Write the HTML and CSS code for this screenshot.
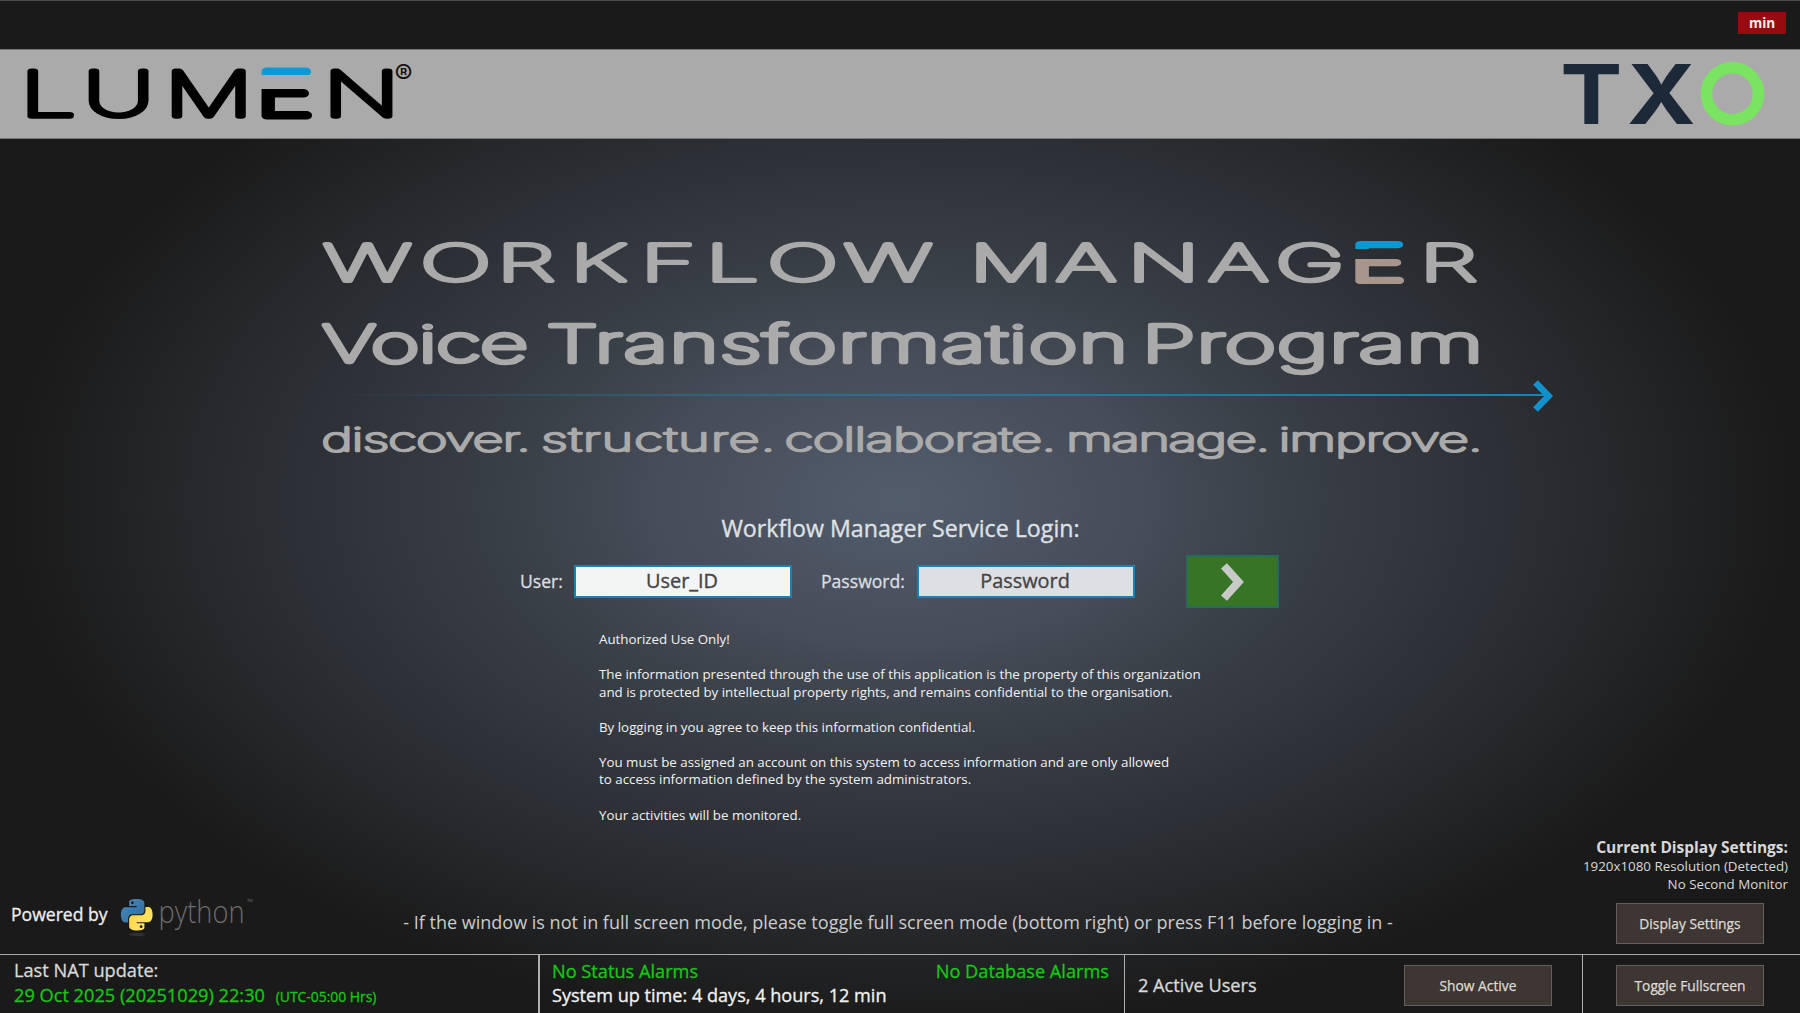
FILE: index.html
```html
<!DOCTYPE html>
<html lang="en">
<head>
<meta charset="utf-8">
<title>Workflow Manager</title>
<link rel="stylesheet" href="styles.css">
</head>
<body>
<div class="topbar"><button class="min">min</button></div>
<header class="band">
  <svg class="lumen" width="400" height="88" viewBox="20 50 400 88">
    <defs>
      <linearGradient id="lumenE" gradientUnits="userSpaceOnUse" x1="0" y1="67" x2="0" y2="119">
        <stop offset="0.155" stop-color="#0d98d4"/><stop offset="0.155" stop-color="#0d98d4" stop-opacity="0"/>
        <stop offset="0.42" stop-color="#000" stop-opacity="0"/><stop offset="0.42" stop-color="#000"/>
      </linearGradient>
    </defs>
    <g transform="scale(1.6 1)">
      <text class="lumen-text" y="116" x="12.800 52 103 160 202.200">LUM<tspan class="lumen-e">E</tspan>N</text>
    </g>
    <text class="reg" x="394.500" y="84">®</text>
  </svg>
  <svg class="txo" width="240" height="88" viewBox="1550 50 240 88">
    <g transform="scale(1.120 1)"><text class="txo-text" y="124" x="1393 1452.800">TX</text></g>
    <circle cx="1732.500" cy="93.800" r="26" fill="none" stroke="#7be362" stroke-width="11.500"/>
  </svg>
</header>
<main>
  <svg class="hero" width="1800" height="340" viewBox="0 139 1800 340">
    <defs>
      <linearGradient id="heroE" gradientUnits="userSpaceOnUse" x1="0" y1="241" x2="0" y2="284">
        <stop offset="0.175" stop-color="#0d98d4"/><stop offset="0.175" stop-color="#0d98d4" stop-opacity="0"/>
        <stop offset="0.430" stop-color="#a8968d" stop-opacity="0"/><stop offset="0.430" stop-color="#a8968d"/>
      </linearGradient>
      <linearGradient id="rule" x1="0" x2="1"><stop offset="0" stop-color="#1785b5" stop-opacity="0"/><stop offset="0.6" stop-color="#1b7fb0" stop-opacity=".8"/><stop offset="1" stop-color="#1785b5"/></linearGradient>
    </defs>
    <g class="line1">
      <g transform="scale(1.88 1)"><text y="281" x="172 223.500 264.200 303.200 340.700 375.300 408.100 448.900">WORKFLOW</text></g>
      <g transform="scale(1.85 1)"><text y="281" x="524 571 609.500 653.200 689.500 730 767.500">MANAG<tspan class="hero-e">E</tspan>R</text></g>
    </g>
    <g class="line2">
      <g transform="scale(1.650 1)"><text x="195.400" y="362" textLength="124.500">Voice</text></g>
      <g transform="scale(1.650 1)"><text x="331.200" y="362" textLength="352.300">Transformation</text></g>
      <g transform="scale(1.750 1)"><text x="652.500" y="362" textLength="195">Program</text></g>
    </g>
    <rect x="322" y="394" width="1222" height="2" fill="url(#rule)"/>
    <path d="M1535.500 382.500 L1548.500 396 L1535.500 409.500" fill="none" stroke="#1292cd" stroke-width="6.500"/>
    <g class="line3" transform="scale(1.650 1)">
      <text x="194.800" y="450.600" textLength="126.800">discover.</text>
      <text x="328" y="450.600" textLength="141.800">structure.</text>
      <text x="475.600" y="450.600" textLength="164.400">collaborate.</text>
      <text x="646.200" y="450.600" textLength="123.500">manage.</text>
      <text x="775" y="450.600" textLength="123.500">improve.</text>
    </g>
  </svg>
  <section class="login">
    <h1>Workflow Manager Service Login:</h1>
    <form class="fields">
      <label class="l-user">User:</label><div class="input user">User_ID</div>
      <label class="l-pass">Password:</label><div class="input pass">Password</div>
      <button type="button" class="go"><svg width="26" height="38" viewBox="0 0 26 38"><path d="M4 2.800 L18.500 19 L4 35.200" fill="none" stroke="#c8cac8" stroke-width="8"/></svg></button>
    </form>
  </section>
  <section class="legal">
    <p>Authorized Use Only!</p>
    <p>The information presented through the use of this application is the property of this organization<br>and is protected by intellectual property rights, and remains confidential to the organisation.</p>
    <p>By logging in you agree to keep this information confidential.</p>
    <p>You must be assigned an account on this system to access information and are only allowed<br>to access information defined by the system administrators.</p>
    <p>Your activities will be monitored.</p>
  </section>
  <section class="lower">
    <div class="powered">
      <span>Powered by</span>
      <svg width="150" height="48" viewBox="0 0 150 48">
        <defs>
          <linearGradient id="pb" x1="0" y1="0" x2="1" y2="1"><stop offset="0" stop-color="#4b8bbe"/><stop offset="1" stop-color="#2f6899"/></linearGradient>
          <linearGradient id="py" x1="0" y1="0" x2="1" y2="1"><stop offset="0" stop-color="#ffd43b"/><stop offset="1" stop-color="#ffe873"/></linearGradient>
        </defs>
        <ellipse cx="17" cy="42.500" rx="8" ry="1.800" fill="#303030"/>
        <g transform="translate(1 7) scale(1.310)">
          <path fill="url(#pb)" d="M14.250.180l.9.2.730.260.590.3.450.320.340.340.250.340.160.330.1.3.040.260.020.2-.010.130V8.500l-.050.630-.130.550-.210.460-.260.380-.3.310-.330.250-.350.190-.350.140-.330.1-.3.070-.260.040-.210.020H8.770l-.690.050-.590.140-.5.220-.410.270-.330.320-.270.350-.2.360-.150.370-.1.350-.070.320-.040.270-.020.210v3.060H3.170l-.210-.030-.280-.070-.320-.120-.350-.180-.360-.260-.360-.360-.350-.460-.320-.590-.280-.730-.210-.880-.140-1.050-.050-1.230.060-1.220.160-1.040.240-.870.320-.710.360-.570.4-.440.420-.330.420-.240.4-.160.360-.1.320-.050.240-.010h.160l.060.010h8.160v-.830H6.180l-.010-2.750-.020-.370.050-.340.110-.310.170-.280.250-.260.310-.230.380-.2.440-.180.510-.150.580-.120.640-.1.710-.060.770-.040.840-.020 1.270.050zm-6.300 1.980l-.230.330-.080.410.080.410.230.340.330.220.410.090.410-.090.330-.220.230-.340.080-.410-.080-.410-.230-.330-.330-.220-.410-.090-.410.090z"/>
          <path fill="url(#py)" d="M21.100 6.110l.280.060.320.120.350.180.360.270.360.350.350.470.320.590.280.730.210.880.140 1.040.050 1.230-.060 1.230-.160 1.040-.240.860-.320.710-.360.570-.4.450-.420.330-.420.240-.4.160-.360.090-.320.050-.240.020-.160-.010h-8.220v.820h5.840l.010 2.760.020.360-.050.340-.110.310-.170.290-.250.250-.310.240-.380.2-.440.170-.510.150-.580.130-.640.090-.710.070-.770.040-.840.010-1.270-.040-1.070-.140-.9-.2-.730-.250-.590-.3-.450-.330-.340-.340-.250-.340-.160-.330-.1-.3-.040-.250-.020-.2.010-.130v-5.340l.050-.640.130-.540.210-.460.260-.380.3-.320.330-.240.350-.2.350-.140.330-.1.3-.060.260-.040.210-.020.130-.010h5.840l.690-.050.590-.140.5-.210.410-.280.330-.320.270-.350.2-.360.150-.360.1-.350.070-.320.040-.280.020-.210V6.070h2.090l.140.010zm-6.470 14.250l-.230.330-.080.410.080.410.230.330.330.230.410.080.410-.080.330-.230.230-.330.080-.410-.080-.410-.230-.330-.330-.230-.410-.080-.410.080z"/>
        </g>
        <text class="python" x="38.500" y="30.500" textLength="86" lengthAdjust="spacingAndGlyphs">python</text>
        <text class="tm" x="127" y="13">™</text>
      </svg>
    </div>
    <p class="hint">- If the window is not in full screen mode, please toggle full screen mode (bottom right) or press F11 before logging in -</p>
    <div class="display">
      <strong>Current Display Settings:</strong>
      <span>1920x1080 Resolution (Detected)</span>
      <span>No Second Monitor</span>
      <button class="btn">Display Settings</button>
    </div>
  </section>
</main>
<footer>
  <div class="cell nat"><div>Last NAT update:</div><div class="green">29 Oct 2025 (20251029) 22:30 <small>(UTC-05:00 Hrs)</small></div></div>
  <div class="cell status">
    <div class="row green"><span>No Status Alarms</span><span>No Database Alarms</span></div>
    <div class="up">System up time: 4 days, 4 hours, 12 min</div>
  </div>
  <div class="cell users"><span>2 Active Users</span><button class="btn">Show Active</button></div>
  <div class="cell full"><button class="btn">Toggle Fullscreen</button></div>
</footer>
</body>
</html>
```
FILE: styles.css
```css
* { box-sizing: border-box; }
body {
  margin: 0; width: 1800px; height: 1013px; overflow: hidden;
  display: flex; flex-direction: column;
  font-family: "Open Sans", "Noto Sans", sans-serif; color: #d8d8d8;
  background: radial-gradient(ellipse 890px 530px at 900px 500px, #525d6c 0%, #464c58 28%, #3b4149 42%, #33373f 56%, #26282b 80%, #1a1a1a 100%) #1a1a1a;
}
p, h1 { margin: 0; }
button { font-family: inherit; padding: 0; }
svg { display: block; }
.topbar { height: 49px; flex: none; border-top: 1px solid #4a4c4c; background: #1a1a1a; display: flex; justify-content: flex-end; padding: 11px 14px 0 0; }
.min { width: 48px; height: 22px; border: 0; background: #960b0f; color: #eee; font-size: 13.500px; font-weight: 700; line-height: 22px; }
.band { height: 90px; flex: none; background: #aaa; border-top: 1px solid #777; border-bottom: 1px solid #777; display: flex; justify-content: space-between; padding: 0 10px 0 20px; }
.lumen-text { font: 100 61.500px Inter, sans-serif; fill: #000; stroke: #000; stroke-width: 7px; stroke-linejoin: round; vector-effect: non-scaling-stroke; }
.lumen-e { fill: url(#lumenE); stroke: url(#lumenE); }
.reg { font: 400 27px Inter, sans-serif; fill: #111; }
.txo-text { font: 700 83px Inter, sans-serif; fill: #1c2938; }
main { flex: 1; min-height: 0; display: flex; flex-direction: column; }
.hero { flex: none; }
.hero text { font-family: Inter, sans-serif; font-weight: 100; fill: #aaa; stroke: #aaa; stroke-linejoin: round; vector-effect: non-scaling-stroke; }
.line1 text, .line2 text { font-size: 50.500px; stroke-width: 6.200px; }
.line3 text { font-size: 32.500px; stroke-width: 3.400px; }
.hero .hero-e { fill: url(#heroE); stroke: url(#heroE); }
.login { margin-top: 34px; display: flex; flex-direction: column; align-items: center; }
h1 { font-size: 23.200px; line-height: 30px; font-weight: 400; color: #dfe1e4; -webkit-text-stroke: .35px; padding-left: 1px; }
.fields { width: 1800px; display: flex; align-items: center; margin-top: 12px; height: 53px; padding-left: 520px; }
.fields label { font-size: 17.600px; color: #dcdee0; white-space: nowrap; -webkit-text-stroke: .3px; padding-bottom: 2px; }
.l-user { width: 54px; }
.l-pass { width: 96px; margin-left: 29px; }
.input { width: 218px; height: 33px; border: 2px solid #1a82b2; background: #f3f4f4; color: #444; font-size: 19.900px; line-height: 28px; text-align: center; padding-right: 2px; -webkit-text-stroke: .35px; }
.pass { background: #dedfe2; }
.go { margin-left: 51px; width: 93px; height: 53px; background: #387426; border: 2px solid #256c5c; display: flex; align-items: center; justify-content: center; }
.legal { margin: 23px 0 0 599px; color: #f2f2f2; font-size: 13.340px; line-height: 17.560px; white-space: nowrap; }
.legal p + p { margin-top: 17.560px; }
.lower { flex: 1; margin-top: 13px; display: grid; grid-template-columns: 400px 1fr 400px; }
.powered { display: flex; align-items: center; gap: 13px; padding: 55px 0 0 11px; align-self: start; white-space: nowrap; }
.powered span { font-size: 17.600px; color: #eee; width: 96px; padding-bottom: 4px; -webkit-text-stroke: .3px; }
.python { font: 300 31px "Open Sans", sans-serif; fill: #6c6c6c; }
.tm { font: 8px "Open Sans", sans-serif; fill: #646464; }
.hint { font-size: 18.020px; color: #ccc; white-space: nowrap; justify-self: center; padding-top: 73px; margin-right: 4px; }
.display { display: flex; flex-direction: column; align-items: flex-end; padding-right: 12px; font-size: 13.350px; line-height: 17.600px; }
.display strong { font-size: 15.500px; line-height: 20px; margin-bottom: 1px; }
.btn { width: 148px; height: 41px; background: #3e3632; border: 1px solid #66605c; color: #dedad6; font-size: 13.800px; -webkit-text-stroke: .25px; }
.display .btn { margin: 10px 24px 0 0; }
footer { flex: none; height: 59px; border-top: 1px solid #aaa; display: flex; }
.cell { border-right: 1px solid #b0b0b0; white-space: nowrap; font-size: 18.200px; line-height: 25px; -webkit-text-stroke: .3px; }
.nat { width: 540px; padding: 3px 0 0 14px; border-right-width: 2px; }
.green { color: #14c814; }
.nat small { font-size: 13.900px; margin-left: 6px; }
.status { width: 585px; padding: 4px 15px 0 12px; }
.status .row { display: flex; justify-content: space-between; height: 24px; }
.up { color: #f2f2f2; font-size: 18.100px; }
.users { width: 458px; display: flex; align-items: center; justify-content: space-between; padding: 3px 30px 0 13px; }
.full { flex: 1; border: 0; display: flex; align-items: center; padding: 3px 0 0 33px; }
```
